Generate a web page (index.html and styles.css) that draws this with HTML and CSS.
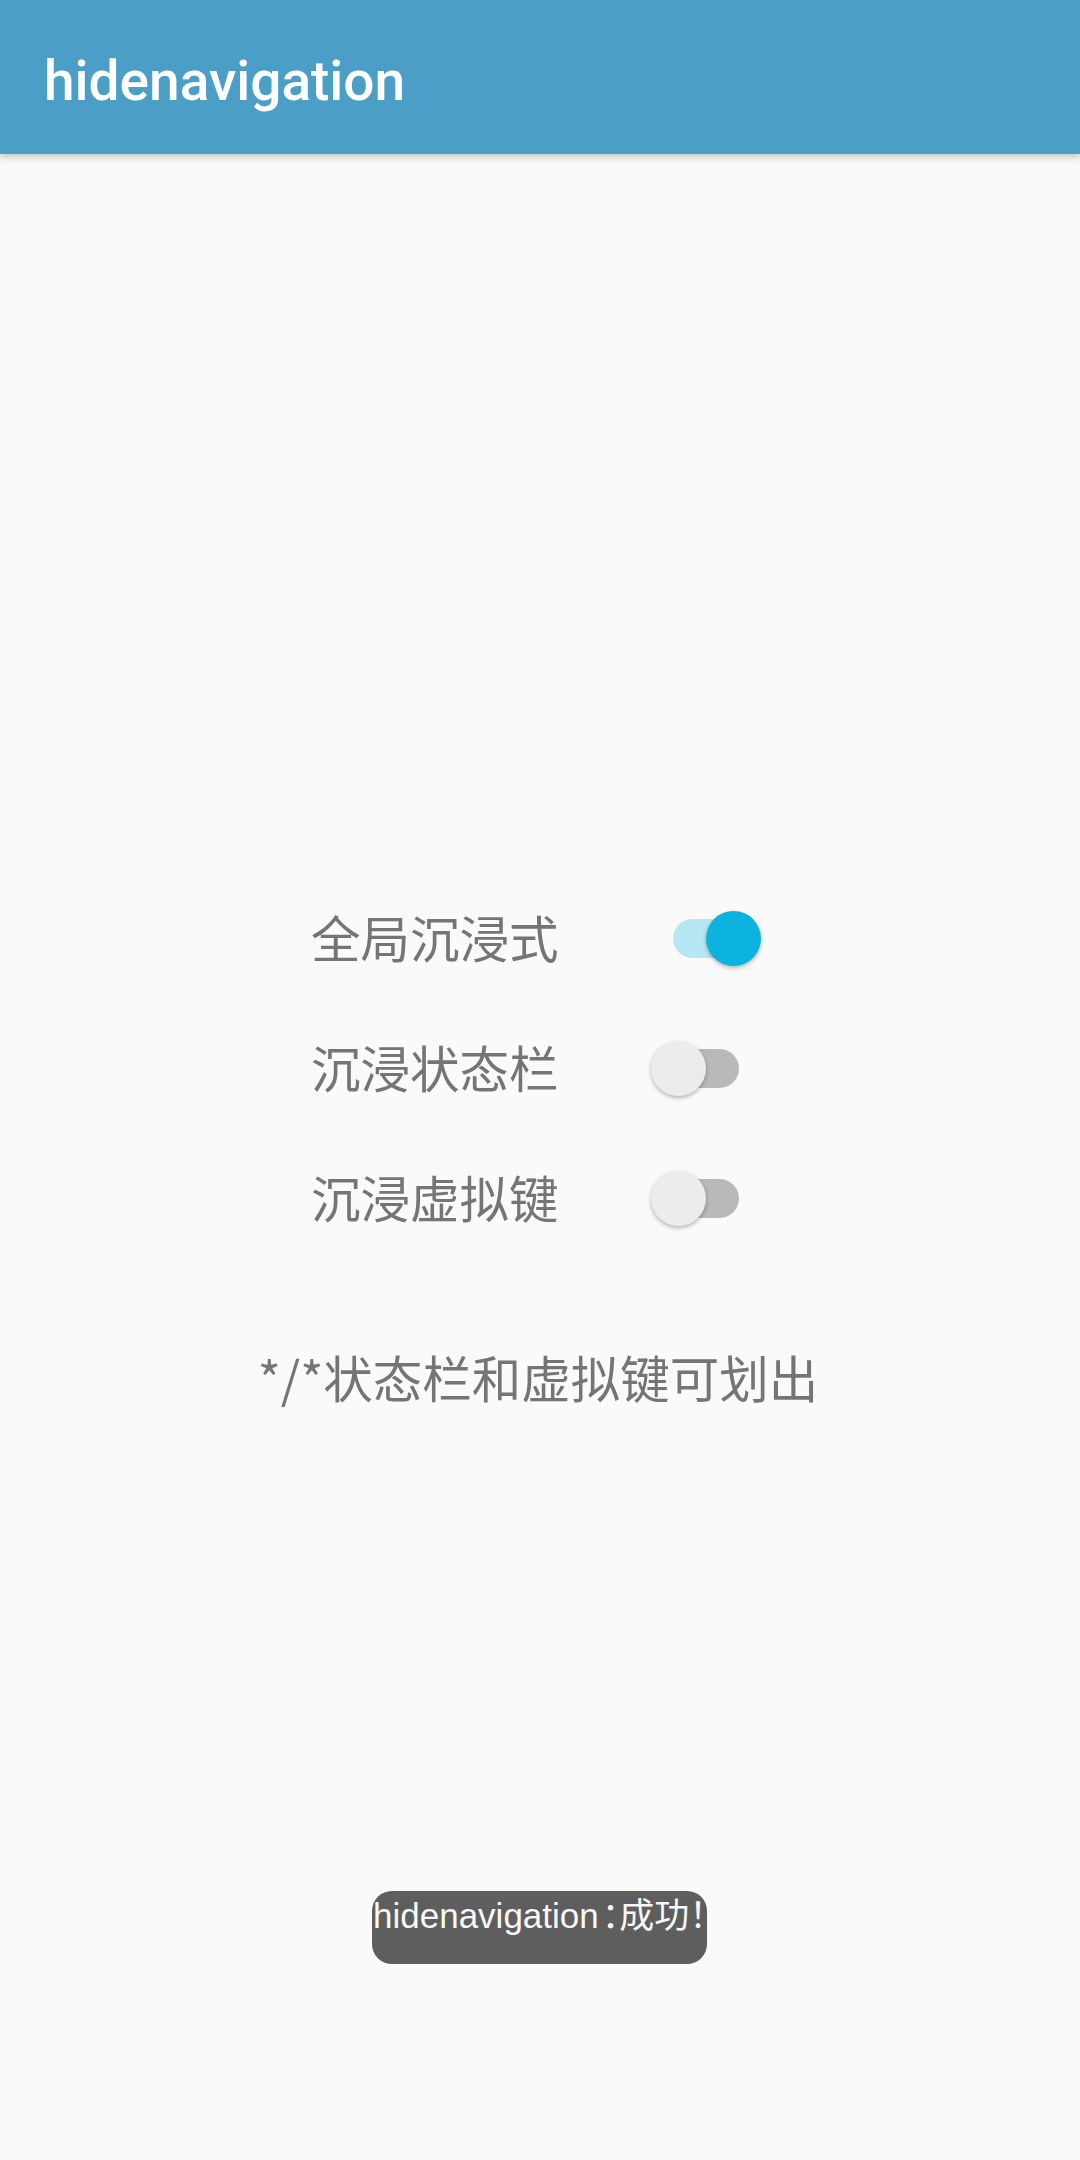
FILE: index.html
```html
<!DOCTYPE html>
<html lang="zh-CN">
<head>
<meta charset="utf-8">
<title>hidenavigation</title>
<link rel="stylesheet" href="styles.css">
</head>
<body>
<div class="app">
  <header class="toolbar">
    <div class="title">hidenavigation</div>
  </header>
  <main class="content">
    <div class="options">
      <div class="row">
        <span class="label">全局沉浸式</span>
        <span class="switch switch-on row-first"><span class="track"></span><span class="thumb"></span></span>
      </div>
      <div class="row">
        <span class="label">沉浸状态栏</span>
        <span class="switch"><span class="track"></span><span class="thumb"></span></span>
      </div>
      <div class="row">
        <span class="label">沉浸虚拟键</span>
        <span class="switch"><span class="track"></span><span class="thumb"></span></span>
      </div>
    </div>
    <p class="hint">*/*状态栏和虚拟键可划出</p>
  </main>
  <div class="toast"><span class="toast-text">hidenavigation<span class="colon">：</span>成功！</span></div>
</div>
</body>
</html>
```

FILE: styles.css
```css
html, body {
  margin: 0;
  padding: 0;
}
body {
  background: #fafafa;
  width: 1080px;
  height: 2160px;
  overflow: hidden;
}
.app {
  position: relative;
  width: 1080px;
  height: 2160px;
  background: #fafafa;
}
.toolbar {
  height: 154px;
  box-sizing: border-box;
  padding: 7px 0 0 44px;
  display: flex;
  align-items: center;
  background: #4b9ec6;
  box-shadow: 0 3px 7px rgba(0, 0, 0, 0.22);
  position: relative;
  z-index: 2;
}
.title {
  font-family: Roboto, "Noto Sans", sans-serif;
  font-weight: 500;
  font-size: 55px;
  color: #ffffff;
}
.content {
  padding-top: 718px;
  display: flex;
  flex-direction: column;
}
.options {
  display: flex;
  flex-direction: column;
  padding-left: 311px;
}
.row {
  height: 130px;
  display: flex;
  align-items: center;
}
.label {
  font-family: "Noto Sans CJK SC", sans-serif;
  font-size: 49.5px;
  line-height: 130px;
  color: #757575;
  width: 247.5px;
  white-space: nowrap;
}
.switch {
  position: relative;
  width: 90px;
  height: 55px;
  margin-left: 92.5px;
  margin-top: 2px;
}
.switch.row-first {
  margin-left: 112.5px;
}
.track {
  position: absolute;
  left: 2px;
  right: 2px;
  top: 8px;
  height: 39px;
  border-radius: 20px;
  background: #b9b9b9;
}
.thumb {
  position: absolute;
  left: 0;
  top: 0;
  width: 55px;
  height: 55px;
  border-radius: 50%;
  background: #ececec;
  box-shadow: 0 2px 4px rgba(0, 0, 0, 0.28);
}
.switch-on .track {
  background: #b8e7f4;
}
.switch-on .thumb {
  left: 35px;
  background: #0cb3df;
}
.hint {
  margin: 80px 0 0 0;
  font-family: "Noto Sans CJK SC", sans-serif;
  font-size: 49.5px;
  line-height: 70px;
  color: #757575;
  text-align: center;
  padding-right: 4px;
}
.toast {
  position: absolute;
  left: 372px;
  top: 1891px;
  width: 335px;
  height: 73px;
  border-radius: 20px;
  background: #5e5e5e;
  overflow: hidden;
  box-sizing: border-box;
  padding: 4px 0 0 1px;
}
.toast-text {
  display: block;
  font-family: "Liberation Sans", "Noto Sans CJK SC", sans-serif;
  font-size: 35px;
  line-height: 42px;
  color: #f7f7f7;
  white-space: nowrap;
  font-feature-settings: "halt";
}
.colon {
  margin-left: 3px;
}
```
